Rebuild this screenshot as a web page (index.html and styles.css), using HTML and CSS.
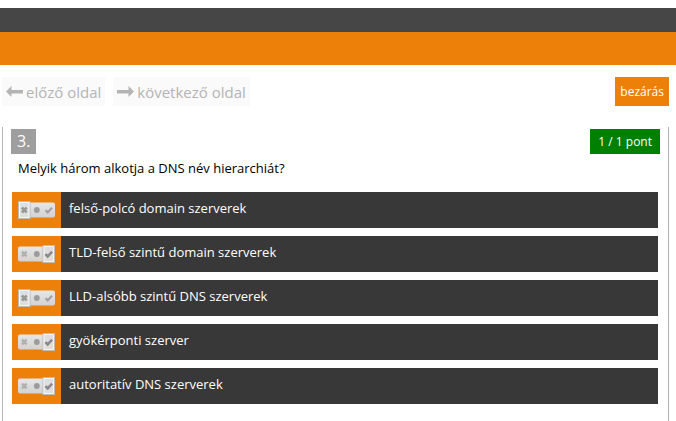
FILE: index.html
```
<!DOCTYPE html>
<html lang="hu">
<head>
<meta charset="utf-8">
<title>DNS teszt</title>
<link rel="stylesheet" href="styles.css">
</head>
<body>
<svg class="sprite" aria-hidden="true">
  <defs>
    <linearGradient id="track" x1="0" y1="0" x2="0" y2="1">
      <stop offset="0" stop-color="#e6e6e6"/>
      <stop offset="1" stop-color="#d2d2d2"/>
    </linearGradient>
  </defs>
  <symbol id="marks" viewBox="0 0 37 18">
    <path d="M4 6.6 8.6 11.4M8.6 6.6 4 11.4" stroke="#b0b0b0" stroke-width="2.4" fill="none"/>
    <circle cx="18.8" cy="9" r="2.9" fill="#9c9c9c"/>
    <path d="M27.5 9.2 29.7 11.4 34 6.8" stroke="#a0a0a0" stroke-width="2.2" fill="none"/>
  </symbol>
  <symbol id="wrong" viewBox="0 0 37 18">
    <rect x="0" y="1.5" width="37" height="15" rx="2" fill="url(#track)"/>
    <rect x="0.5" y="0.5" width="11.5" height="17" fill="#dedede" stroke="#b9b9b9"/>
    <rect x="1.5" y="1.5" width="9.5" height="15" fill="none" stroke="#f6f6f6"/>
    <use href="#marks" width="37" height="18"/>
    <path d="M4 6.6 8.6 11.4M8.6 6.6 4 11.4" stroke="#989898" stroke-width="2.4" fill="none"/>
  </symbol>
  <symbol id="right" viewBox="0 0 37 18">
    <rect x="0" y="1.5" width="37" height="15" rx="2" fill="url(#track)"/>
    <rect x="25" y="0.5" width="11.5" height="17" fill="#dedede" stroke="#b9b9b9"/>
    <rect x="26" y="1.5" width="9.5" height="15" fill="none" stroke="#f6f6f6"/>
    <use href="#marks" width="37" height="18"/>
    <path d="M27.5 9.2 29.7 11.4 34 6.8" stroke="#8a8a8a" stroke-width="2.4" fill="none"/>
  </symbol>
</svg>

<header>
  <div class="topbar"></div>
  <div class="banner"></div>
</header>

<nav class="pager">
  <button class="page-button" type="button" disabled>
    <svg class="arrow" viewBox="0 0 17 12" aria-hidden="true"><path d="M0 5.5 5.5 0V4H17V7.5H5.5V11Z"/></svg>
    <span>előző oldal</span>
  </button>
  <button class="page-button" type="button" disabled>
    <svg class="arrow" viewBox="0 0 17 12" aria-hidden="true"><path d="M17 5.5 11.5 0V4H0V7.5H11.5V11Z"/></svg>
    <span>következő oldal</span>
  </button>
  <button class="close-button" type="button">bezárás</button>
</nav>

<main class="question">
  <div class="question-head">
    <span class="number">3.</span>
    <span class="score">1 / 1 pont</span>
  </div>
  <p class="prompt">Melyik három alkotja a DNS név hierarchiát?</p>
  <ul class="answers">
    <li class="answer">
      <button class="toggle" type="button" aria-labelledby="a1"><svg class="switch" aria-hidden="true"><use href="#wrong"/></svg></button>
      <span class="label" id="a1">felső-polcó domain szerverek</span>
    </li>
    <li class="answer">
      <button class="toggle" type="button" aria-labelledby="a2"><svg class="switch" aria-hidden="true"><use href="#right"/></svg></button>
      <span class="label" id="a2">TLD-felső szintű domain szerverek</span>
    </li>
    <li class="answer">
      <button class="toggle" type="button" aria-labelledby="a3"><svg class="switch" aria-hidden="true"><use href="#wrong"/></svg></button>
      <span class="label" id="a3">LLD-alsóbb szintű DNS szerverek</span>
    </li>
    <li class="answer">
      <button class="toggle" type="button" aria-labelledby="a4"><svg class="switch" aria-hidden="true"><use href="#right"/></svg></button>
      <span class="label" id="a4">gyökérponti szerver</span>
    </li>
    <li class="answer">
      <button class="toggle" type="button" aria-labelledby="a5"><svg class="switch" aria-hidden="true"><use href="#right"/></svg></button>
      <span class="label" id="a5">autoritatív DNS szerverek</span>
    </li>
  </ul>
</main>
</body>
</html>
```
FILE: styles.css
```
* {
  box-sizing: border-box;
}

body {
  min-height: 100vh;
  margin: 0;
  padding-top: 8px;
  display: flex;
  flex-direction: column;
  background: #fff;
  color: #000;
  font: 13px/20px "Open Sans", sans-serif;
}

button {
  border: 0;
  font: inherit;
}

.sprite {
  position: absolute;
  width: 0;
  height: 0;
}

.topbar {
  height: 24px;
  background: #464646;
}

.banner {
  height: 33px;
  background: #ed8008;
}

.pager {
  display: flex;
  gap: 8px;
  padding: 12px 7px 0 2px;
}

.page-button {
  display: flex;
  align-items: center;
  gap: 3px;
  height: 29px;
  padding: 0 4px;
  background: #fafafa;
  color: #b4b4b4;
  font-size: 15px;
}

.arrow {
  width: 17px;
  height: 12px;
  fill: #b4b4b4;
}

.close-button {
  height: 29px;
  margin-left: auto;
  padding: 0 5px;
  background: #ed8008;
  color: #fff;
  font-size: 12px;
}

.question {
  flex: 1;
  margin: 21px 7px 0 2px;
  padding: 2px 8px 0;
  border: solid #b4b4b4;
  border-width: 0 1px;
}

.question-head {
  display: flex;
  justify-content: space-between;
  line-height: 25px;
  color: #fff;
}

.number {
  padding: 0 6px;
  background: #9e9e9e;
  font-size: 16px;
}

.score {
  padding: 0 8px;
  background: #008000;
  font-size: 12px;
}

.prompt {
  margin: 4px 7px 14px;
}

.answers {
  display: grid;
  gap: 8px;
  margin: 0;
  padding: 0 2px 16px 1px;
  list-style: none;
}

.answer {
  display: flex;
  min-height: 36px;
  background: #383838;
  color: #fff;
}

.toggle {
  display: flex;
  align-items: center;
  width: 49px;
  padding: 0 6px;
  background: #ed8008;
}

.switch {
  width: 37px;
  height: 18px;
}

.label {
  padding: 6px 8px;
}
```
